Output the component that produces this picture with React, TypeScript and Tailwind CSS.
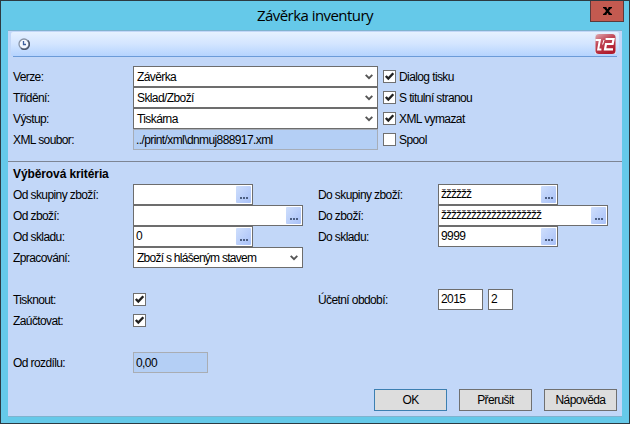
import type { ReactNode } from "react";

type Option = {
  label: string;
  checked: boolean;
};

function Label({ children, className = "" }: { children: ReactNode; className?: string }) {
  return <span className={`block shrink-0 whitespace-nowrap pt-px ${className}`}>{children}</span>;
}

function Checkbox({ checked }: { checked: boolean }) {
  return (
    <span className="block h-[13px] w-[13px] shrink-0 border border-[#707070] bg-white">
      {checked && (
        <svg className="block" width="11" height="11" viewBox="0 0 11 11">
          <path d="M1.8 5 L4.3 7.6 L9.3 2.2" fill="none" stroke="#212121" strokeWidth="2.4" />
        </svg>
      )}
    </span>
  );
}

function SelectBox({ value, className }: { value: string; className: string }) {
  return (
    <div
      className={`flex h-[21px] items-center justify-between border border-[#6d6d6d] bg-white pl-[3px] pr-1 ${className}`}
    >
      <span className="whitespace-nowrap pt-px">{value}</span>
      <svg className="mt-px shrink-0" width="8" height="6" viewBox="0 0 8 6">
        <path d="M0.7 0.9 L4 4.2 L7.3 0.9" fill="none" stroke="#555555" strokeWidth="1.9" />
      </svg>
    </div>
  );
}

function LookupField({
  value = "",
  dense = false,
  className,
}: {
  value?: string;
  dense?: boolean;
  className: string;
}) {
  return (
    <div className={`flex h-[21px] justify-between border border-[#6d6d6d] bg-white pl-0.5 pr-px pt-px ${className}`}>
      <span className={`whitespace-nowrap leading-4 ${dense ? "tracking-[-1px]" : ""}`}>{value}</span>
      <button
        type="button"
        className="flex h-[17px] w-[15px] items-end justify-center gap-px rounded-[1px] bg-linear-to-br from-[#cfdffc] to-[#a9c1f8] pb-1"
      >
        <i className="h-0.5 w-0.5 bg-[#4d5f83]" />
        <i className="h-0.5 w-0.5 bg-[#4d5f83]" />
        <i className="h-0.5 w-0.5 bg-[#4d5f83]" />
      </button>
    </div>
  );
}

function TextBox({ value, className }: { value: string; className: string }) {
  return (
    <div className={`h-[21px] border border-[#6d6d6d] bg-white pl-0.5 pt-px leading-4 ${className}`}>
      {value}
    </div>
  );
}

function ClockIcon() {
  return (
    <svg width="12" height="12" viewBox="0 0 12 12">
      <circle cx="6" cy="6" r="5" fill="#f4f8ff" stroke="#8793a6" strokeWidth="1.3" />
      <path d="M9.8 2.6 A5.1 5.1 0 0 1 3 10.2" fill="none" stroke="#4e596e" strokeWidth="1.4" />
      <path d="M5.5 3 V6.5 H8" fill="none" stroke="#3d5f9c" strokeWidth="1.3" />
    </svg>
  );
}

function Logo() {
  return (
    <svg width="22" height="22" viewBox="0 0 22 22">
      <defs>
        <linearGradient id="logo-red" x1="0" y1="0" x2="0.5" y2="1">
          <stop offset="0" stopColor="#dfa9b1" />
          <stop offset="0.45" stopColor="#c04757" />
          <stop offset="1" stopColor="#b01c2e" />
        </linearGradient>
      </defs>
      <rect y="1" width="21" height="20" fill="#dfe5f2" />
      <rect x="0.5" y="1" width="20" height="20" rx="3.5" fill="url(#logo-red)" />
      <path d="M0.5 7 H4.9 L3.2 16.4 H6.4" fill="none" stroke="#ffffff" strokeWidth="2" />
      <path d="M10.6 6 H18.6 L17.6 11 H11 L10 16.4 H18" fill="none" stroke="#ffffff" strokeWidth="2.2" />
      <path d="M9 7 L7.6 11.5" stroke="#ffffff" strokeWidth="1" />
    </svg>
  );
}

const printSettings = [
  { label: "Verze:", value: "Závěrka" },
  { label: "Třídění:", value: "Sklad/Zboží" },
  { label: "Výstup:", value: "Tiskárna" },
];

const printOptions: Option[] = [
  { label: "Dialog tisku", checked: true },
  { label: "S titulní stranou", checked: true },
  { label: "XML vymazat", checked: true },
  { label: "Spool", checked: false },
];

const ranges = [
  { from: "Od skupiny zboží:", to: "Do skupiny zboží:", fromValue: "", toValue: "žžžžžž", wide: false, dense: true },
  { from: "Od zboží:", to: "Do zboží:", fromValue: "", toValue: "žžžžžžžžžžžžžžžžžžžž", wide: true, dense: true },
  { from: "Od skladu:", to: "Do skladu:", fromValue: "0", toValue: "9999", wide: false, dense: false },
];

const actions = ["OK", "Přerušit", "Nápověda"];

export default function App() {
  return (
    <div className="flex h-[424px] w-[630px] flex-col overflow-hidden border border-[#2c3a42] bg-[#65c9e9] px-[7px] pb-1.5 font-['Liberation_Sans',Arial,sans-serif] text-[12px] leading-[13px] tracking-[-0.6px] text-black">
      <header className="grid h-[29px] shrink-0 grid-cols-[1fr_auto_1fr] items-start">
        <h1 className="col-start-2 pt-[3px] font-['Open_Sans','Noto_Sans',sans-serif] text-[15px] leading-[22px] tracking-[-0.55px]">
          Závěrka inventury
        </h1>
        <button
          type="button"
          className="mr-[-2px] flex h-[21px] w-[34px] items-center justify-center justify-self-end border border-t-0 border-[#5b3a3c] bg-[#c35a50]"
        >
          <svg width="9" height="8" viewBox="0 0 9 8">
            <path d="M1.4 0 L7.6 8 M7.6 0 L1.4 8" stroke="#000000" strokeWidth="2.2" />
            <path d="M0 0.6 H3.4 M5.6 0.6 H9 M0 7.4 H3.4 M5.6 7.4 H9" stroke="#000000" strokeWidth="1.2" />
          </svg>
        </button>
      </header>

      <main className="flex flex-1 flex-col border-y border-[#7fb3cf] bg-[#c2d7f8]">
        <div className="ml-[3px] mr-[3px] mt-px flex h-6 shrink-0 items-center justify-between rounded-[2px] bg-linear-to-b from-[#e6f1ff] via-[#d3e5ff] to-[#b5d3fe] pl-[7px] pr-0.5">
          <ClockIcon />
          <Logo />
        </div>
        <div className="mx-[5px] h-px shrink-0 bg-[#6b9bd8]" />

        <section className="mt-[9px] grid shrink-0 grid-cols-[250px_1fr] pl-[5px]">
          <div className="w-[365px]">
            {printSettings.map((setting) => (
              <div key={setting.label} className="flex h-[21px] items-center">
                <Label className="w-[120px]">{setting.label}</Label>
                <SelectBox value={setting.value} className="w-[245px]" />
              </div>
            ))}
            <div className="flex h-[21px] items-center">
              <Label className="w-[120px]">XML soubor:</Label>
              <div className="h-[21px] w-[245px] border border-[#a6adb8] bg-[#b4cff5] pl-0.5 pt-0.5 leading-4">
                ../print/xml\dnmuj888917.xml
              </div>
            </div>
          </div>
          <div className="pl-[120px]">
            {printOptions.map((option) => (
              <label key={option.label} className="flex h-[21px] items-center gap-[3px]">
                <Checkbox checked={option.checked} />
                <Label>{option.label}</Label>
              </label>
            ))}
          </div>
        </section>

        <div className="mt-[11px] h-px shrink-0 bg-[#7d8594]" />

        <section className="shrink-0 pl-[5px]">
          <h2 className="h-[22px] pt-[6px] font-bold tracking-[-0.1px]">Výběrová kritéria</h2>
          {ranges.map((range) => (
            <div key={range.from} className="flex h-[21px] items-center">
              <Label className="w-[120px]">{range.from}</Label>
              <div className="w-[185px]">
                <LookupField value={range.fromValue} className={range.wide ? "w-[170px]" : "w-[120px]"} />
              </div>
              <Label className="w-[120px]">{range.to}</Label>
              <LookupField
                value={range.toValue}
                dense={range.dense}
                className={range.wide ? "w-[170px]" : "w-[120px]"}
              />
            </div>
          ))}
          <div className="flex h-[21px] items-center">
            <Label className="w-[120px]">Zpracování:</Label>
            <SelectBox value="Zboží s hlášeným stavem" className="w-[170px] tracking-[-0.73px]" />
          </div>
          <div className="mt-[21px] flex h-[21px] items-center">
            <Label className="w-[120px]">Tisknout:</Label>
            <div className="w-[185px]">
              <Checkbox checked />
            </div>
            <Label className="w-[120px]">Účetní období:</Label>
            <TextBox value="2015" className="w-[45px]" />
            <TextBox value="2" className="ml-[5px] w-[25px]" />
          </div>
          <div className="flex h-[21px] items-center">
            <Label className="w-[120px]">Zaúčtovat:</Label>
            <Checkbox checked />
          </div>
          <div className="mt-[21px] flex h-[21px] items-center">
            <Label className="w-[120px]">Od rozdílu:</Label>
            <div className="h-[21px] w-[75px] border border-[#a9adb3] bg-[#b4cff5] pl-0.5 pt-0.5 leading-4">0,00</div>
          </div>
        </section>

        <footer className="mt-4 flex shrink-0 justify-end gap-3 pr-[5px]">
          {actions.map((action) => (
            <button
              key={action}
              type="button"
              className={`h-[22px] w-[73px] border bg-[#dddddd] ${
                action === "OK" ? "border-[#3c7fb1]" : "border-[#707070]"
              }`}
            >
              {action}
            </button>
          ))}
        </footer>
      </main>
    </div>
  );
}
